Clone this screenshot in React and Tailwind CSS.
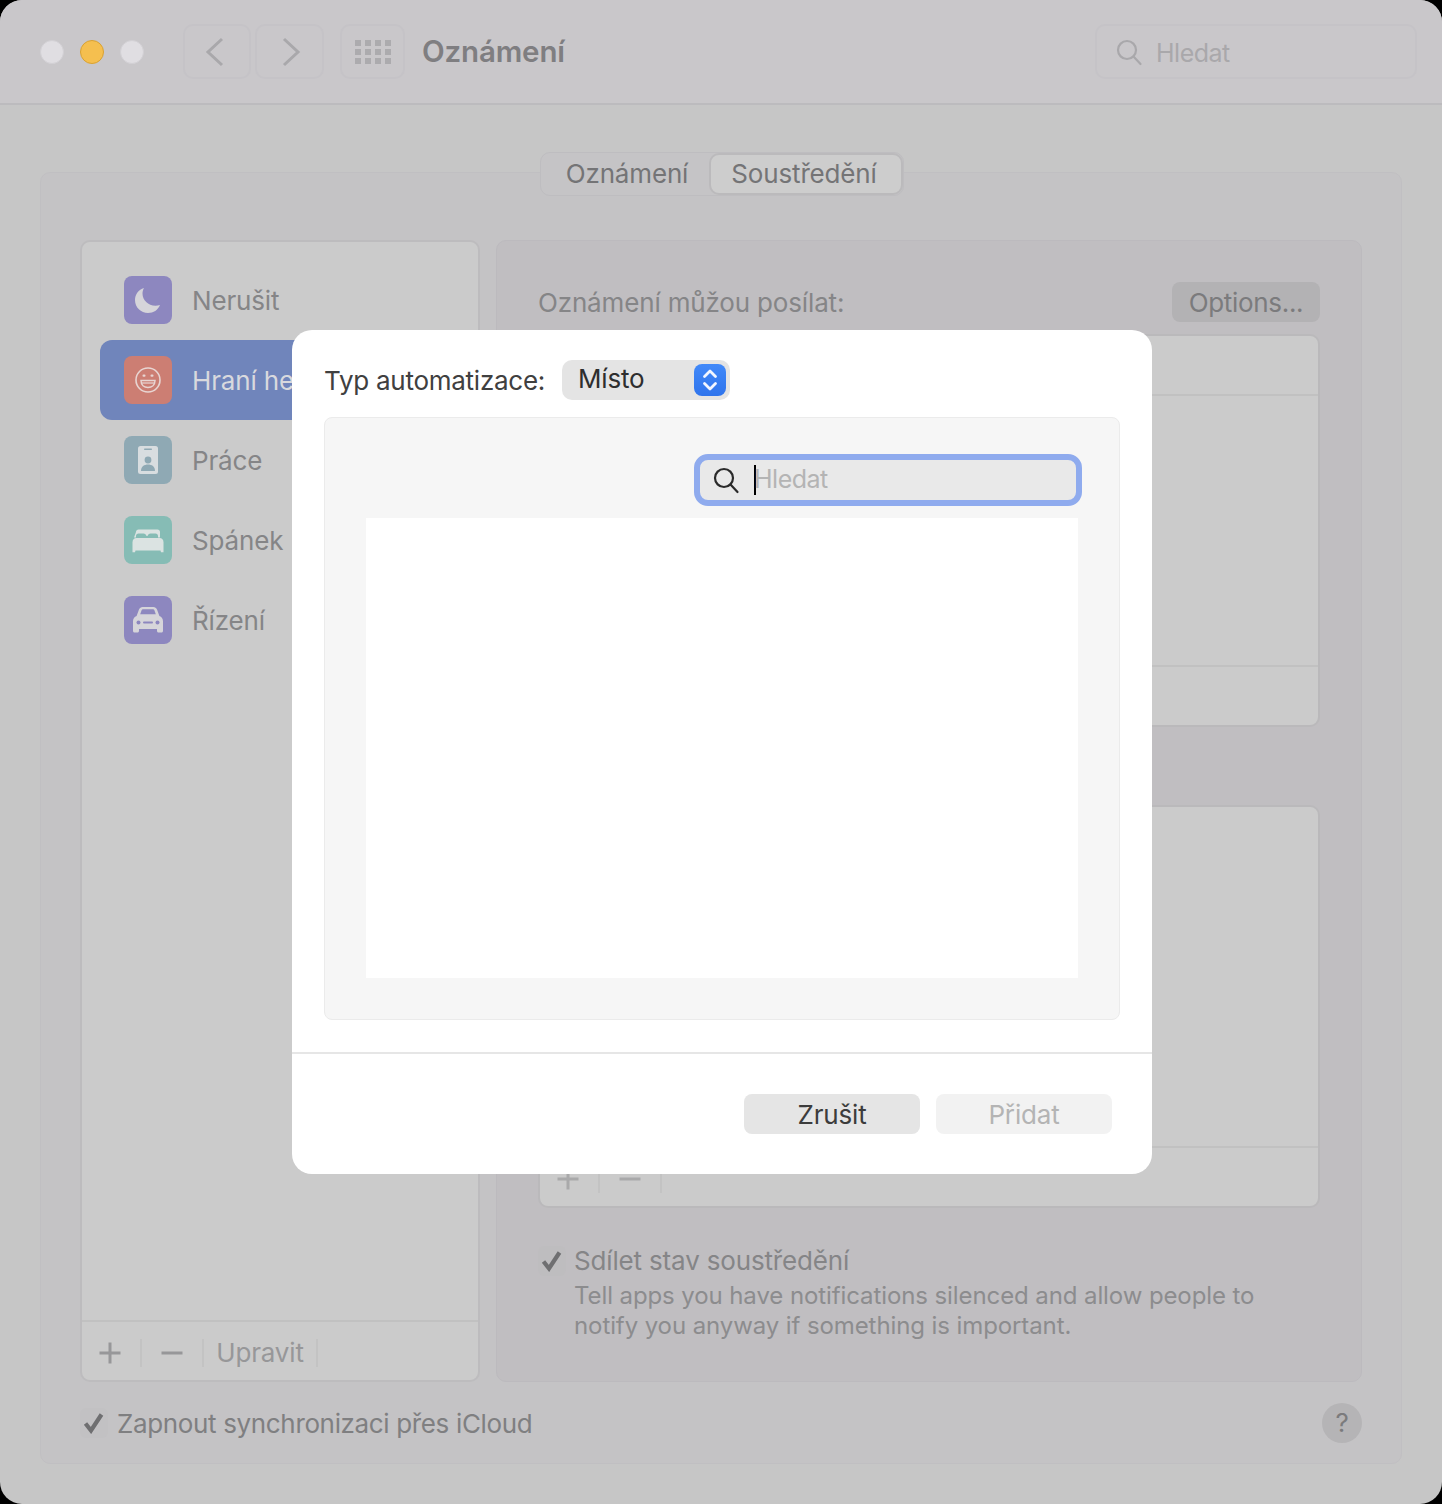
import React from "react";

const font = { fontFamily: "Inter, 'Noto Sans', sans-serif" };

const MoonIcon = () => (
  <svg viewBox="0 0 48 48" className="w-12 h-12">
    <path d="M20 12C14.500 13.500 11 18.500 11 24c0 7.500 6 13 13 13 5.500 0 10-3 12-8-1.500.5-3 .8-4.500.8C24 29.800 18.500 24 18.500 17.500c0-2 .5-3.800 1.500-5.500z" fill="#d6d5da" />
  </svg>
);

const SmileIcon = () => (
  <svg viewBox="0 0 48 48" className="w-12 h-12" fill="none" stroke="#e8d5d2">
    <circle cx="24" cy="24" r="12" strokeWidth="1.600" />
    <rect x="18.500" y="18.500" width="3" height="2.200" rx="1" fill="#e8d5d2" stroke="none" />
    <rect x="26.500" y="18.500" width="3" height="2.200" rx="1" fill="#e8d5d2" stroke="none" />
    <path d="M17 24.500h14c0 4.500-3.200 7-7 7s-7-2.500-7-7z" strokeWidth="1.500" />
    <path d="M17.500 27h13" strokeWidth="1.200" />
  </svg>
);

const WorkIcon = () => (
  <svg viewBox="0 0 48 48" className="w-12 h-12">
    <rect x="14" y="10" width="20" height="28" rx="2.500" fill="#d8dde0" />
    <rect x="20" y="12.500" width="8" height="1.500" rx="0.700" fill="#8fa9b4" />
    <circle cx="24" cy="24" r="3.400" fill="#8fa9b4" />
    <path d="M17 35c0-4.500 3.200-6.500 7-6.500s7 2 7 6.500z" fill="#8fa9b4" />
  </svg>
);

const BedIcon = () => (
  <svg viewBox="0 0 48 48" className="w-12 h-12" fill="#dbe3e2">
    <path d="M12 16c0-1.400 1.100-2.500 2.500-2.500h19c1.400 0 2.500 1.100 2.500 2.500v5.500h-2v-1.500c0-1.400-1-2.500-2.500-2.500h-5c-1.500 0-2.500 1-3 2.500h-1c-.5-1.500-1.500-2.500-3-2.500h-5c-1.500 0-2.500 1.100-2.500 2.500v1.500h-2z" />
    <path d="M8.500 26.500C8.500 23.500 10 22 12.500 22h23c2.500 0 4 1.500 4 4.500V33h-31z" />
    <path d="M8.500 33h31v3.200h-2.500l-.5-1.700h-25l-.5 1.700H8.500z" />
  </svg>
);

const CarIcon = () => (
  <svg viewBox="0 0 48 48" className="w-12 h-12">
    <path d="M15 13.500c.6-1.400 2-2.500 3.600-2.500h10.800c1.600 0 3 1.100 3.600 2.500l2.400 6.500c2.200.8 3.600 2.800 3.600 5.200V35c0 .8-.7 1.500-1.500 1.500h-3c-.8 0-1.500-.7-1.500-1.500v-2H15v2c0 .8-.7 1.500-1.500 1.500h-3C9.700 36.500 9 35.800 9 35v-9.800c0-2.400 1.400-4.400 3.600-5.200z" fill="#d6d5da" />
    <path d="M17.500 14.500c.3-.8 1-1.300 1.800-1.300h9.400c.8 0 1.500.5 1.800 1.300l1.300 3.800H16.200z" fill="#8d87bf" />
    <circle cx="14.500" cy="26.500" r="2" fill="#8d87bf" />
    <circle cx="33.500" cy="26.500" r="2" fill="#8d87bf" />
    <rect x="19" y="25.500" width="10" height="2" rx="1" fill="#8d87bf" />
  </svg>
);

const SearchIcon = ({ color, width = "2.200" }) => (
  <svg viewBox="0 0 28 28" className="w-7 h-7" fill="none" stroke={color} strokeWidth={width} strokeLinecap="round">
    <circle cx="12" cy="12" r="9" />
    <path d="M18.500 18.500l7 7.500" />
  </svg>
);

const Check = () => (
  <svg viewBox="0 0 22 22" className="w-[22px] h-[22px]" fill="none" stroke="#6f6f71" strokeWidth="4.200">
    <path d="M2.500 11.500l5.500 7L18.500 2.500" />
  </svg>
);

const Plus = ({ color }) => (
  <svg viewBox="0 0 24 24" className="w-6 h-6" fill="none" stroke={color} strokeWidth="3">
    <path d="M12 1.500v21M1.500 12h21" />
  </svg>
);

const Minus = ({ color }) => (
  <svg viewBox="0 0 24 24" className="w-6 h-6" fill="none" stroke={color} strokeWidth="3">
    <path d="M1.500 12h21" />
  </svg>
);

const focusItems = [
  { name: "Nerušit", tile: "bg-[#8d87bf]", icon: <MoonIcon /> },
  { name: "Hraní her", tile: "bg-[#cc7e73]", icon: <SmileIcon />, active: true },
  { name: "Práce", tile: "bg-[#8fa9b4]", icon: <WorkIcon /> },
  { name: "Spánek", tile: "bg-[#86bcb5]", icon: <BedIcon /> },
  { name: "Řízení", tile: "bg-[#8d87bf]", icon: <CarIcon /> },
];

const ListFooter = ({ color }) => (
  <div className="h-[60px] border-t-2 border-[#c1c1c1] flex items-center pt-[3px] shrink-0">
    <div className="w-[60px] h-[28px] flex items-center justify-center pr-[2px] border-r-2 border-[#c3c3c3]">
      <Plus color={color} />
    </div>
    <div className="w-[62px] h-[28px] flex items-center justify-center border-r-2 border-[#c3c3c3]">
      <Minus color={color} />
    </div>
  </div>
);

const Modal = () => (
  <div className="absolute left-[292px] top-[330px] w-[860px] h-[844px] bg-white rounded-[20px] pt-[30px]">
    <div className="flex items-center h-[40px] pl-[32px]">
      <span className="text-[26px] text-[#404040] w-[238px] whitespace-nowrap leading-none pt-[2px] tracking-[-0.01em]">Typ automatizace:</span>
      <div className="w-[168px] h-[40px] rounded-[10px] bg-[#e4e4e4] flex items-center justify-between pl-[16px] pr-[4px]">
        <span className="text-[26px] text-[#2e2e2e] leading-none pb-[2px]">Místo</span>
        <div className="w-[32px] h-[32px] rounded-[8px] bg-gradient-to-b from-[#4189f9] to-[#2f74ec] flex items-center justify-center">
          <svg viewBox="0 0 16 24" className="w-[16px] h-[24px]" fill="none" stroke="#f2f6ff" strokeWidth="2.800" strokeLinecap="round" strokeLinejoin="round">
            <path d="M2.500 8.500L8 3l5.500 5.500M2.500 15.500L8 21l5.500-5.500" />
          </svg>
        </div>
      </div>
    </div>
    <div className="mx-[32px] mt-[17px] h-[603px] bg-[#f6f6f6] border border-[#ebebeb] rounded-[8px] pt-[36px]">
      <div className="flex justify-end pr-[37px]">
        <div className="w-[388px] h-[52px] rounded-[14px] border-[6px] border-[#8fabee] bg-[#e9e9e9] flex items-center pl-[12px]">
          <SearchIcon color="#2a2a2a" />
          <span className="ml-[14px] w-[2px] h-[30px] bg-black shrink-0" />
          <span className="-ml-[2px] pb-[2px] text-[25px] text-[#b4b4b4] leading-none tracking-[-0.02em]">Hledat</span>
        </div>
      </div>
      <div className="mt-[12px] ml-[41px] w-[712px] h-[460px] bg-white" />
    </div>
    <div className="mt-[32px] h-[2px] bg-[#e6e6e6]" />
    <div className="mt-[40px] pr-[40px] flex justify-end gap-[16px]">
      <button className="w-[176px] h-[40px] rounded-[8px] bg-[#e5e5e5] text-[26px] text-[#3c3c3c]">Zrušit</button>
      <button className="w-[176px] h-[40px] rounded-[8px] bg-[#f2f2f2] text-[26px] text-[#b4b4b4]">Přidat</button>
    </div>
  </div>
);

export default function App() {
  return (
    <div className="relative w-[1442px] h-[1504px] bg-black overflow-hidden tracking-[-0.01em]" style={font}>
      <div className="h-full rounded-[22px] overflow-hidden bg-[#c6c6c6] flex flex-col">
        {/* title bar */}
        <div className="h-[105px] shrink-0 bg-[#c9c7ca] border-b-2 border-[#bcbbbe] flex items-center pl-[40px] pr-[25px]">
          <div className="flex items-center gap-[16px]">
            <span className="w-[24px] h-[24px] rounded-full bg-[#e0dee2] border border-[#d2d0d4]" />
            <span className="w-[24px] h-[24px] rounded-full bg-[#f5bf4f] border border-[#d9a233]" />
            <span className="w-[24px] h-[24px] rounded-full bg-[#e0dee2] border border-[#d2d0d4]" />
          </div>
          <div className="ml-[39px] flex gap-[4px]">
            <div className="w-[68px] h-[55px] rounded-[10px] border-2 border-[#c5c3c7] flex items-center justify-center pr-[4px]">
              <svg viewBox="0 0 20 30" className="w-[20px] h-[30px]" fill="none" stroke="#a9a8ab" strokeWidth="3">
                <path d="M17 2L3 15l14 13" />
              </svg>
            </div>
            <div className="w-[69px] h-[55px] rounded-[10px] border-2 border-[#c5c3c7] flex items-center justify-center pl-[2px]">
              <svg viewBox="0 0 20 30" className="w-[20px] h-[30px]" fill="none" stroke="#a9a8ab" strokeWidth="3">
                <path d="M3 2l14 13L3 28" />
              </svg>
            </div>
          </div>
          <div className="ml-[16px] w-[65px] h-[55px] rounded-[10px] border-2 border-[#c5c3c7] flex items-center justify-center">
            <div className="grid grid-cols-4 gap-x-[4px] gap-y-[3px]">
              {Array.from({ length: 12 }).map((_, i) => (
                <span key={i} className="w-[6px] h-[6px] bg-[#acabae]" />
              ))}
            </div>
          </div>
          <h1 className="ml-[17px] text-[29.500px] font-semibold text-[#7f7e81] leading-none">Oznámení</h1>
          <div className="ml-auto w-[322px] h-[55px] rounded-[10px] border-2 border-[#c5c3c7] flex items-center pl-[18px]">
            <SearchIcon color="#a9a8ab" />
            <span className="ml-[13px] text-[25px] text-[#a9a8ab] leading-none pt-[4px] tracking-[-0.02em]">Hledat</span>
          </div>
        </div>

        {/* preference pane */}
        <div className="mx-[40px] mt-[67px] h-[1292px] bg-[#c4c3c5] border border-[#c0bfc2] rounded-[10px] flex flex-col">
          <div className="flex justify-center -mt-[21px] pl-[2px]">
            <div className="h-[44px] w-[364px] rounded-[10px] bg-[#c5c4c6] border border-[#bebdc0] flex items-center">
              <div className="w-[168px] pl-[4px] text-center text-[26px] text-[#747476] leading-none">Oznámení</div>
              <div className="flex-1 h-[42px] pr-[4px] rounded-[10px] bg-[#cdcdcd] border-2 border-[#bbbabc] flex items-center justify-center text-[26px] text-[#747476] leading-none">
                Soustředění
              </div>
            </div>
          </div>

          <div className="flex gap-[16px] px-[39px] mt-[44px]">
            {/* focus list */}
            <div className="w-[400px] h-[1142px] bg-[#cbcbcb] border-2 border-[#bdbcbe] rounded-[10px] flex flex-col">
              <div className="flex-1 pt-[18px] px-[18px]">
                {focusItems.map((item) => (
                  <div
                    key={item.name}
                    className={`h-[80px] rounded-[12px] pl-[24px] flex items-center gap-[20px] ${item.active ? "bg-[#7085bb]" : ""}`}
                  >
                    <div className={`w-[48px] h-[48px] rounded-[8px] ${item.tile}`}>{item.icon}</div>
                    <span className={`text-[26px] leading-none pt-[2px] ${item.active ? "text-[#d8d9de]" : "text-[#858587]"}`}>{item.name}</span>
                  </div>
                ))}
              </div>
              <div className="h-[60px] border-t-2 border-[#c1c1c1] flex items-center pt-[3px] shrink-0">
                <div className="w-[60px] h-[28px] flex items-center justify-center pr-[2px] border-r-2 border-[#c3c3c3]">
                  <Plus color="#979799" />
                </div>
                <div className="w-[62px] h-[28px] flex items-center justify-center border-r-2 border-[#c3c3c3]">
                  <Minus color="#979799" />
                </div>
                <div className="w-[114px] h-[28px] flex items-center justify-center border-r-2 border-[#c3c3c3] text-[26px] text-[#979799] leading-none">
                  Upravit
                </div>
              </div>
            </div>

            {/* detail panel */}
            <div className="w-[866px] h-[1142px] bg-[#c0bec1] border border-[#bcbabe] rounded-[10px] px-[41px] pt-[41px]">
              <div className="flex items-center justify-between h-[40px]">
                <span className="text-[26px] text-[#858587] leading-none pt-[2px]">Oznámení můžou posílat:</span>
                <div className="w-[148px] h-[40px] rounded-[8px] bg-[#b3b2b4] flex items-center justify-center text-[26px] text-[#7b7b7d] leading-none pt-[2px] tracking-[-0.012em]">
                  Options...
                </div>
              </div>
              <div className="mt-[12px] h-[393px] bg-[#cbcbcb] border-2 border-[#bab9bb] rounded-[10px] flex flex-col">
                <div className="h-[60px] border-b-2 border-[#c1c1c1] shrink-0" />
                <div className="flex-1" />
                <ListFooter color="#a9a9aa" />
              </div>
              <div className="mt-[78px] h-[403px] bg-[#cbcbcb] border-2 border-[#bab9bb] rounded-[10px] flex flex-col">
                <div className="flex-1" />
                <ListFooter color="#a9a9aa" />
              </div>
              <div className="mt-[36px] flex gap-[8px]">
                <div className="w-[28px] h-[30px] mt-[2px] rounded-[6px] bg-[#bebdbf] flex items-center justify-center shrink-0">
                  <Check />
                </div>
                <div>
                  <div className="h-[34px] flex items-center text-[26px] text-[#858587] leading-none">Sdílet stav soustředění</div>
                  <p className="mt-[3px] text-[24px] leading-[30px] text-[#8c8c8e] tracking-[-0.004em]">
                    Tell apps you have notifications silenced and allow people to
                    <br />
                    notify you anyway if something is important.
                  </p>
                </div>
              </div>
            </div>
          </div>

          <div className="flex-1 flex items-center justify-between pl-[39px] pr-[39px]">
            <div className="flex items-center gap-[9px]">
              <div className="w-[28px] h-[30px] rounded-[6px] bg-[#c2c1c3] flex items-center justify-center">
                <Check />
              </div>
              <span className="text-[26px] text-[#7f7f81] leading-none pt-[2px] tracking-[-0.0135em]">Zapnout synchronizaci přes iCloud</span>
            </div>
            <div className="w-[40px] h-[40px] rounded-full bg-[#b5b4b6] flex items-center justify-center text-[26px] text-[#7b7b7d] leading-none">?</div>
          </div>
        </div>
      </div>

      <Modal />
    </div>
  );
}
